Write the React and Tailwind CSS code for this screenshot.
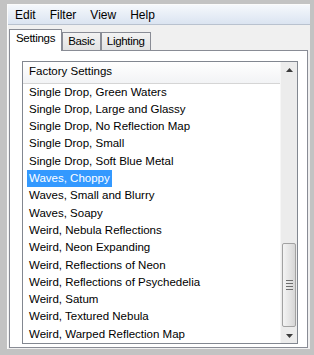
import { useState } from 'react';

const presets = [
  'Single Drop, Green Waters',
  'Single Drop, Large and Glassy',
  'Single Drop, No Reflection Map',
  'Single Drop, Small',
  'Single Drop, Soft Blue Metal',
  'Waves, Choppy',
  'Waves, Small and Blurry',
  'Waves, Soapy',
  'Weird, Nebula Reflections',
  'Weird, Neon Expanding',
  'Weird, Reflections of Neon',
  'Weird, Reflections of Psychedelia',
  'Weird, Satum',
  'Weird, Textured Nebula',
  'Weird, Warped Reflection Map',
];

const menus = ['Edit', 'Filter', 'View', 'Help'];
const tabs = ['Settings', 'Basic', 'Lighting'];

function ScrollArrow({ down }) {
  return (
    <svg width="7" height="4" viewBox="0 0 7 4" className="block">
      {down ? (
        <path d="M0 0H7L3.5 4Z" fill="#3c3c3c" />
      ) : (
        <path d="M0 4H7L3.5 0Z" fill="#3c3c3c" />
      )}
    </svg>
  );
}

function Scrollbar() {
  return (
    <div className="flex w-[17px] flex-col bg-[#ececec] border-l border-[#f6f6f6]">
      <div className="flex h-[17px] items-center justify-center">
        <ScrollArrow />
      </div>
      <div className="flex-1 flex flex-col justify-end pb-[2px]">
        <div className="mx-[1px] flex h-[84px] items-center justify-center rounded-[2px] border border-[#a2a2a2] bg-gradient-to-r from-[#f4f4f4] via-[#e6e6e6] to-[#d6d6d6]">
          <div className="flex flex-col gap-[2px]">
            <div className="h-px w-[7px] bg-[#6e6e6e]" />
            <div className="h-px w-[7px] bg-[#6e6e6e]" />
            <div className="h-px w-[7px] bg-[#6e6e6e]" />
            <div className="h-px w-[7px] bg-[#6e6e6e]" />
          </div>
        </div>
      </div>
      <div className="flex h-[14px] items-center justify-center">
        <ScrollArrow down />
      </div>
    </div>
  );
}

export default function App() {
  const [activeTab, setActiveTab] = useState('Settings');
  const [selected, setSelected] = useState('Waves, Choppy');

  return (
    <div
      className="h-[355px] w-[314px] bg-[#c3c3c3] pb-[6px] pl-[7px] pr-[4px] pt-[4px] text-[11.5px] text-black"
      style={{ fontFamily: '"Liberation Sans", Arial, sans-serif' }}
    >
      <div className="flex h-full flex-col border-l border-t border-[#fbfbfb] bg-[#f0f0f0]">
        <div className="flex h-[21px] items-center border-b border-[#b9c2cf] bg-gradient-to-b from-[#f5f8fc] to-[#dbe4f1] text-[12px]">
          {menus.map((menu) => (
            <span className="px-[7px] leading-none" key={menu}>
              {menu}
            </span>
          ))}
        </div>

        <div className="flex h-[25px] items-end pl-[1px] text-[11.5px]">
          {tabs.map((tab) => {
            const isActive = tab === activeTab;
            return (
              <button
                className={
                  isActive
                    ? 'relative z-10 -mb-px flex h-[22px] items-center border border-b-0 border-[#898c95] bg-white px-[6px] pb-[2px] tracking-[-0.3px]'
                    : 'flex h-[18px] items-center border border-b-0 border-[#898c95] bg-gradient-to-b from-[#f3f3f3] to-[#e2e2e2] px-[5px] pt-px tracking-[-0.3px]'
                }
                key={tab}
                onClick={() => setActiveTab(tab)}
                type="button"
              >
                {tab}
              </button>
            );
          })}
        </div>

        <div className="mb-[1px] ml-[1px] mr-[2px] flex flex-1 flex-col border border-[#898c95] bg-white pb-[3px] pl-[12px] pr-[9px] pt-[10px]">
          <div className="flex flex-1 border border-[#828790]">
            <div className="flex flex-1 flex-col">
              <div className="flex h-[22px] items-center border-b border-[#d5d5d5] bg-gradient-to-b from-white to-[#f2f3f5] pl-[6px]">
                Factory Settings
              </div>
              <ul className="flex flex-col pl-[4px]">
                {presets.map((preset) => {
                  const isSelected = preset === selected;
                  return (
                    <li className="flex h-[17.3px] items-center" key={preset}>
                      <span
                        className={
                          isSelected
                            ? 'flex h-full items-center whitespace-nowrap bg-[#3399ff] px-[2px] text-white'
                            : 'whitespace-nowrap px-[2px]'
                        }
                        onClick={() => setSelected(preset)}
                      >
                        {preset}
                      </span>
                    </li>
                  );
                })}
              </ul>
            </div>
            <Scrollbar />
          </div>
        </div>
      </div>
    </div>
  );
}
